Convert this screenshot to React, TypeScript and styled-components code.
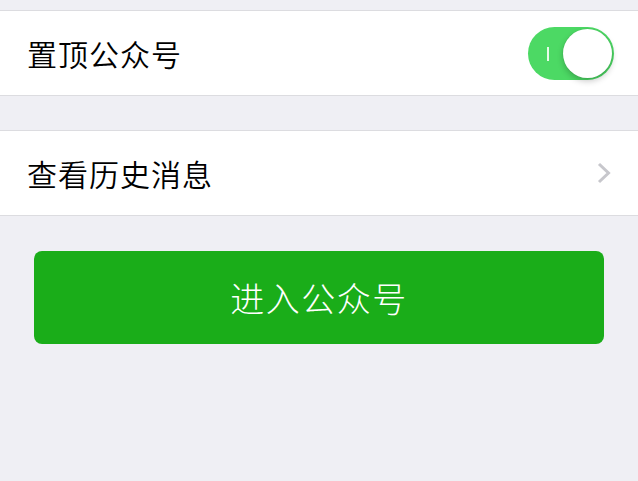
import React, { useState } from 'react';
import styled, { createGlobalStyle } from 'styled-components';

const GlobalStyle = createGlobalStyle`
  html, body {
    margin: 0;
    padding: 0;
    background: #efeff4;
  }
  body {
    font-family: "Noto Sans CJK SC", "Noto Sans", sans-serif;
  }
`;

const Page = styled.div`
  width: 638px;
  height: 481px;
  background: #efeff4;
  padding-top: 10px;
  box-sizing: border-box;
  overflow: hidden;
`;

const Group = styled.div<{ $gap?: number }>`
  background: #fff;
  border-top: 1px solid #dcdce0;
  border-bottom: 1px solid #dcdce0;
  margin-bottom: ${(p) => p.$gap ?? 0}px;
`;

const Row = styled.div`
  height: 84px;
  display: flex;
  align-items: center;
  justify-content: space-between;
  padding: 0 25px 0 27px;
`;

const Label = styled.span`
  font-size: 30px;
  font-weight: 350;
  color: #000;
  letter-spacing: 1px;
`;

const Track = styled.button<{ $on: boolean }>`
  position: relative;
  width: 86px;
  height: 53px;
  border-radius: 27px;
  border: none;
  padding: 0;
  background: ${(p) => (p.$on ? '#4cd964' : '#e5e5ea')};
  cursor: pointer;
  margin-right: -1px;
`;

const OnMark = styled.span`
  position: absolute;
  left: 19px;
  top: 20px;
  width: 2px;
  height: 14px;
  background: #e8fbe9;
`;

const Knob = styled.span<{ $on: boolean }>`
  position: absolute;
  top: 2px;
  left: ${(p) => (p.$on ? '35px' : '2px')};
  width: 49px;
  height: 49px;
  border-radius: 50%;
  background: #fff;
  box-shadow: 0 3px 6px rgba(0, 0, 0, 0.22), 0 0 0 0.5px rgba(0, 0, 0, 0.08);
`;

const Chevron = styled.svg`
  width: 14px;
  height: 22px;
  margin-right: 2px;
`;

const ButtonWrap = styled.div`
  padding: 35px 34px 0 34px;
`;

const EnterButton = styled.button`
  width: 100%;
  height: 93px;
  border: none;
  border-radius: 8px;
  background: #1aad19;
  color: #fff;
  font-family: "Noto Sans CJK SC", "Noto Sans", sans-serif;
  font-size: 34px;
  font-weight: 300;
  letter-spacing: 1.5px;
  cursor: pointer;
`;

const App = () => {
  const [pinned, setPinned] = useState(true);
  return (
    <>
      <GlobalStyle />
      <Page>
        <Group $gap={34}>
          <Row>
            <Label>置顶公众号</Label>
            <Track $on={pinned} onClick={() => setPinned(!pinned)}>
              {pinned && <OnMark />}
              <Knob $on={pinned} />
            </Track>
          </Row>
        </Group>
        <Group>
          <Row>
            <Label>查看历史消息</Label>
            <Chevron viewBox="0 0 14 22">
              <path d="M2 2 L11.5 11 L2 20" fill="none" stroke="#c7c7cc" strokeWidth="3" />
            </Chevron>
          </Row>
        </Group>
        <ButtonWrap>
          <EnterButton>进入公众号</EnterButton>
        </ButtonWrap>
      </Page>
    </>
  );
};

export default App;
